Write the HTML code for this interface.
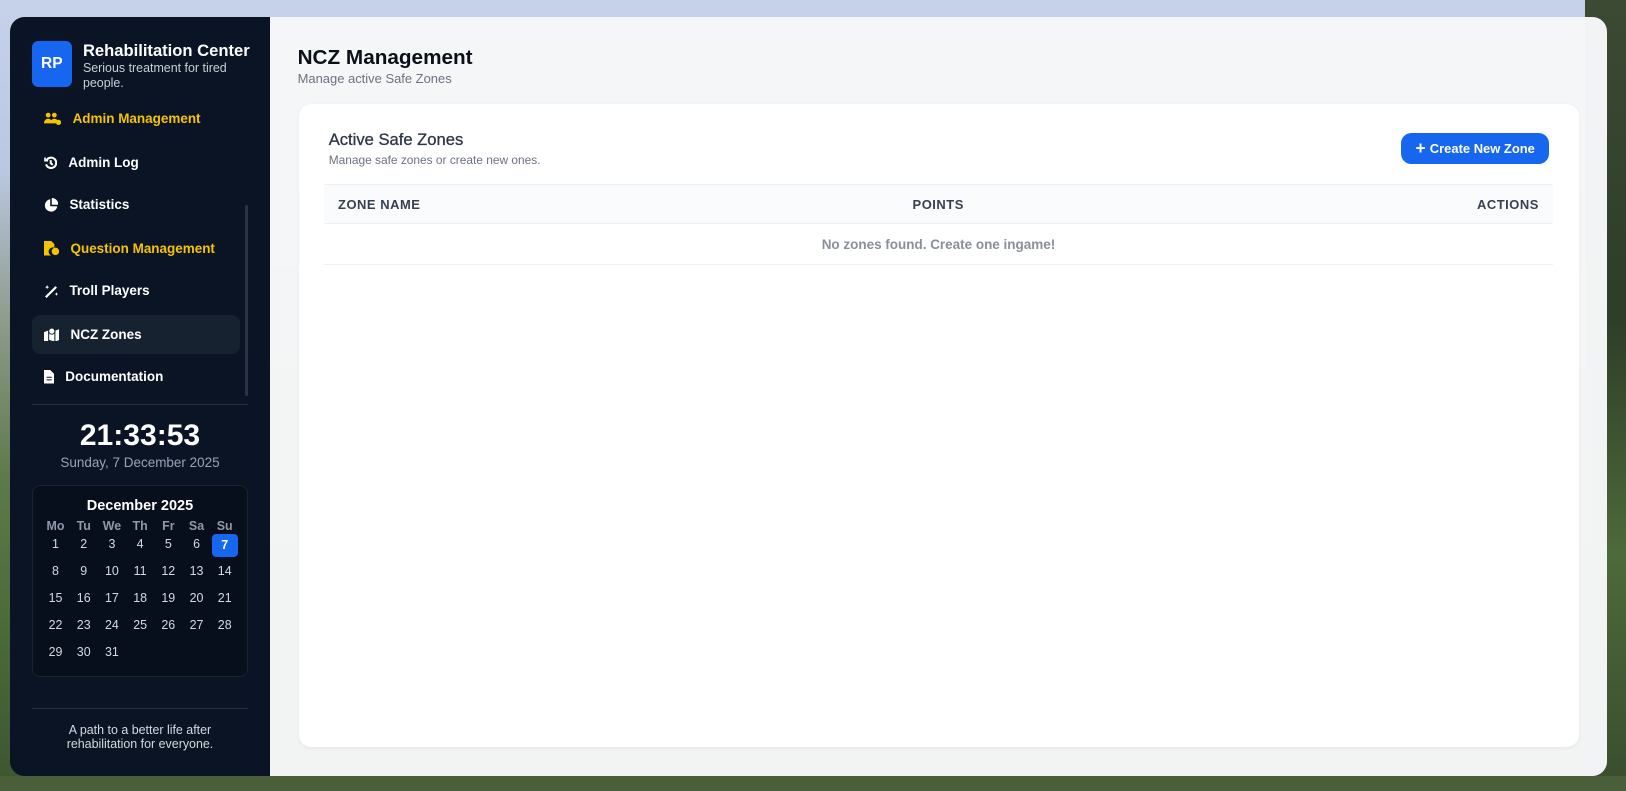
<!DOCTYPE html>
<html style="zoom:1.037"><head><meta charset="utf-8"><style>
*{box-sizing:border-box;margin:0;padding:0}
body{width:1568px;height:763px;overflow:hidden;font-family:"Liberation Sans",Arial,sans-serif;position:relative;
background:linear-gradient(180deg,#c5d2ea 0%,#b9c7df 22%,#8f9c8f 40%,#5f7a4a 60%,#4a6a38 80%,#3d5530 100%);}
.trees{position:absolute;right:0;top:0;width:40px;height:763px;background:linear-gradient(180deg,#3c4a34,#2e3d28 40%,#4d6a3a 70%,#3a4d2e);}
.ground{position:absolute;left:0;right:0;top:748px;height:15px;background:#4a5e3a;}
.app{position:absolute;left:10px;top:16px;width:1540px;height:732px;border-radius:14px;overflow:hidden;display:flex;}
.side{width:250px;height:100%;background:#0a1424;position:relative;color:#fff;}
.main{flex:1;background:rgba(246,247,248,0.98);position:relative;}
.logo{position:absolute;left:21px;top:24px;width:38px;height:44px;background:#1766f0;border-radius:6px;font-weight:bold;font-size:15px;display:flex;align-items:center;justify-content:center;}
.brand{position:absolute;left:70px;top:24px;}
.brand b{font-size:16px;display:block}
.brand span{font-size:12px;color:#c8ced8;line-height:14px;display:block;width:160px}
.nav{position:absolute;left:21px;width:200px;height:37px;display:flex;align-items:center;font-size:13px;font-weight:bold;}
.nav svg{margin:0 11px 0 11px}
.y{color:#f5c400}
.act{background:#172231;border-radius:8px}
.scroll{position:absolute;left:226px;top:182px;width:3px;height:184px;background:#2a3444;border-radius:2px}
.hr{position:absolute;left:21px;width:208px;height:1px;background:#27313f}
.clock{position:absolute;left:0;width:250px;text-align:center;top:388px;font-size:29px;font-weight:bold}
.date{position:absolute;left:0;width:250px;text-align:center;top:423px;font-size:13px;color:#9aa3b1}
.cal{position:absolute;left:21px;top:452px;width:208px;height:185px;border:1px solid #1a2331;border-radius:8px;background:#070f1c}
.cal h4{text-align:center;font-size:14px;margin-top:11px}
.grid{display:grid;grid-template-columns:repeat(7,27.2px);margin-left:8px;font-size:12px;text-align:center;margin-top:4px}
.grid div{height:26px;line-height:20px;color:#d5dae2}
.grid .h{height:16px;line-height:16px;color:#8e99ab;font-weight:bold}
.grid .sel{background:#1766f0;color:#fff;font-weight:bold;border-radius:4px;height:22px;line-height:22px;margin:0 1px}
.foot{position:absolute;left:0;width:250px;top:681px;text-align:center;font-size:12px;color:#d3d8e0;line-height:14px}
h1{position:absolute;left:27px;top:28px;font-size:20px;color:#0b0f17}
.sub{position:absolute;left:27px;top:52px;font-size:12.5px;color:#6b7280}
.card{position:absolute;left:28px;top:84px;width:1235px;height:620px;background:#fff;border-radius:12px;box-shadow:0 1px 4px rgba(0,0,0,.05)}
.card h2{position:absolute;left:29px;top:25px;font-size:16px;font-weight:normal;color:#2d3748;-webkit-text-stroke:.3px #2d3748}
.card .s{position:absolute;left:29px;top:48px;font-size:11.5px;color:#6b7280}
.btn{position:absolute;left:1063px;top:28px;width:143px;height:30px;background:#1766f0;border-radius:10px;color:#fff;font-weight:bold;font-size:12.5px;display:flex;align-items:center;justify-content:center}
.th{position:absolute;left:24px;top:77px;width:1186px;height:39px;background:#fafbfc;border-top:1px solid #eef0f3;border-bottom:1px solid #eef0f3;font-size:12.5px;font-weight:bold;color:#374151;letter-spacing:.5px}
.th span{position:absolute;top:12px}
.empty{position:absolute;left:24px;top:116px;width:1186px;height:40px;border-bottom:1px solid #eef0f3;text-align:center;line-height:40px;font-size:13px;color:#8a8f98;font-weight:bold}
</style></head><body>
<div class="trees"></div><div class="ground"></div>
<div class="app">
<div class="side">
<div class="logo">RP</div>
<div class="brand"><b>Rehabilitation Center</b><span>Serious treatment for tired people.</span></div>
<div class="nav y" style="top:80px"><svg width="17" height="13" viewBox="0 0 17 13" fill="#f5c400"><circle cx="4" cy="3" r="2.3"/><circle cx="10" cy="3" r="2.3"/><path d="M0 11c0-3 2-4.5 4-4.5s4 1.5 4 4.5zM6 11c0-3 2-4.5 4-4.5s4 1.5 4 4.5z"/><circle cx="14" cy="10" r="2.5"/></svg>Admin Management</div>
<div class="nav" style="top:122px"><svg width="13" height="13" viewBox="0 0 13 13" fill="none" stroke="#fff" stroke-width="2"><path d="M2.5 4A5 5 0 1 1 2 8"/><path d="M6.5 4v3l2 1.5"/><path d="M1 1.5v3h3" stroke-width="1.6"/></svg>Admin Log</div>
<div class="nav" style="top:163px"><svg width="14" height="14" viewBox="0 0 14 14" fill="#fff"><path d="M6 1.2A6 6 0 1 0 12.8 8H6z"/><path d="M7.5 0v6.5H14A6.5 6.5 0 0 0 7.5 0z"/></svg>Statistics</div>
<div class="nav y" style="top:205px"><svg width="15" height="14" viewBox="0 0 15 14" fill="#f5c400"><path d="M0 0h7l3 3v3.5A4 4 0 0 0 7 14H0z"/><circle cx="11" cy="10" r="3.6"/></svg>Question Management</div>
<div class="nav" style="top:246px"><svg width="14" height="14" viewBox="0 0 14 14" fill="#fff"><path d="M1 12L11 2l1.5 1.5-10 10z"/><path d="M3 1l.6 1.4L5 3l-1.4.6L3 5l-.6-1.4L1 3l1.4-.6zM12 8l.5 1.2 1.2.5-1.2.5L12 11.4l-.5-1.2-1.2-.5 1.2-.5z"/></svg>Troll Players</div>
<div class="nav act" style="top:288px"><svg width="15" height="13" viewBox="0 0 15 13" fill="#fff"><path d="M0 4l4-1.5v10L0 14zM11 2.5l4-1.5v10.5L11 13zM5 2.5l5 1.5v9L5 11.5z"/><circle cx="7.5" cy="3" r="3" fill="#fff" stroke="#172231"/></svg>NCZ Zones</div>
<div class="nav" style="top:329px"><svg width="10" height="13" viewBox="0 0 10 13" fill="#fff"><path d="M0 0h6l4 4v9H0z"/><path d="M2.5 7h5M2.5 9.5h5" stroke="#0a1424"/></svg>Documentation</div>
<div class="scroll"></div>
<div class="hr" style="top:374px"></div>
<div class="clock">21:33:53</div>
<div class="date">Sunday, 7 December 2025</div>
<div class="cal"><h4>December 2025</h4>
<div class="grid">
<div class="h">Mo</div><div class="h">Tu</div><div class="h">We</div><div class="h">Th</div><div class="h">Fr</div><div class="h">Sa</div><div class="h">Su</div>
<div>1</div><div>2</div><div>3</div><div>4</div><div>5</div><div>6</div><div class="sel">7</div>
<div>8</div><div>9</div><div>10</div><div>11</div><div>12</div><div>13</div><div>14</div>
<div>15</div><div>16</div><div>17</div><div>18</div><div>19</div><div>20</div><div>21</div>
<div>22</div><div>23</div><div>24</div><div>25</div><div>26</div><div>27</div><div>28</div>
<div>29</div><div>30</div><div>31</div>
</div></div>
<div class="hr" style="top:667px"></div>
<div class="foot">A path to a better life after<br>rehabilitation for everyone.</div>
</div>
<div class="main">
<h1>NCZ Management</h1>
<div class="sub">Manage active Safe Zones</div>
<div class="card">
<h2>Active Safe Zones</h2>
<div class="s">Manage safe zones or create new ones.</div>
<div class="btn"><span style="font-size:17px;margin-right:4px">+</span>Create New Zone</div>
<div class="th"><span style="left:14px">ZONE NAME</span><span style="left:568px">POINTS</span><span style="right:14px">ACTIONS</span></div>
<div class="empty">No zones found. Create one ingame!</div>
</div>
</div>
</div>
</body></html>
